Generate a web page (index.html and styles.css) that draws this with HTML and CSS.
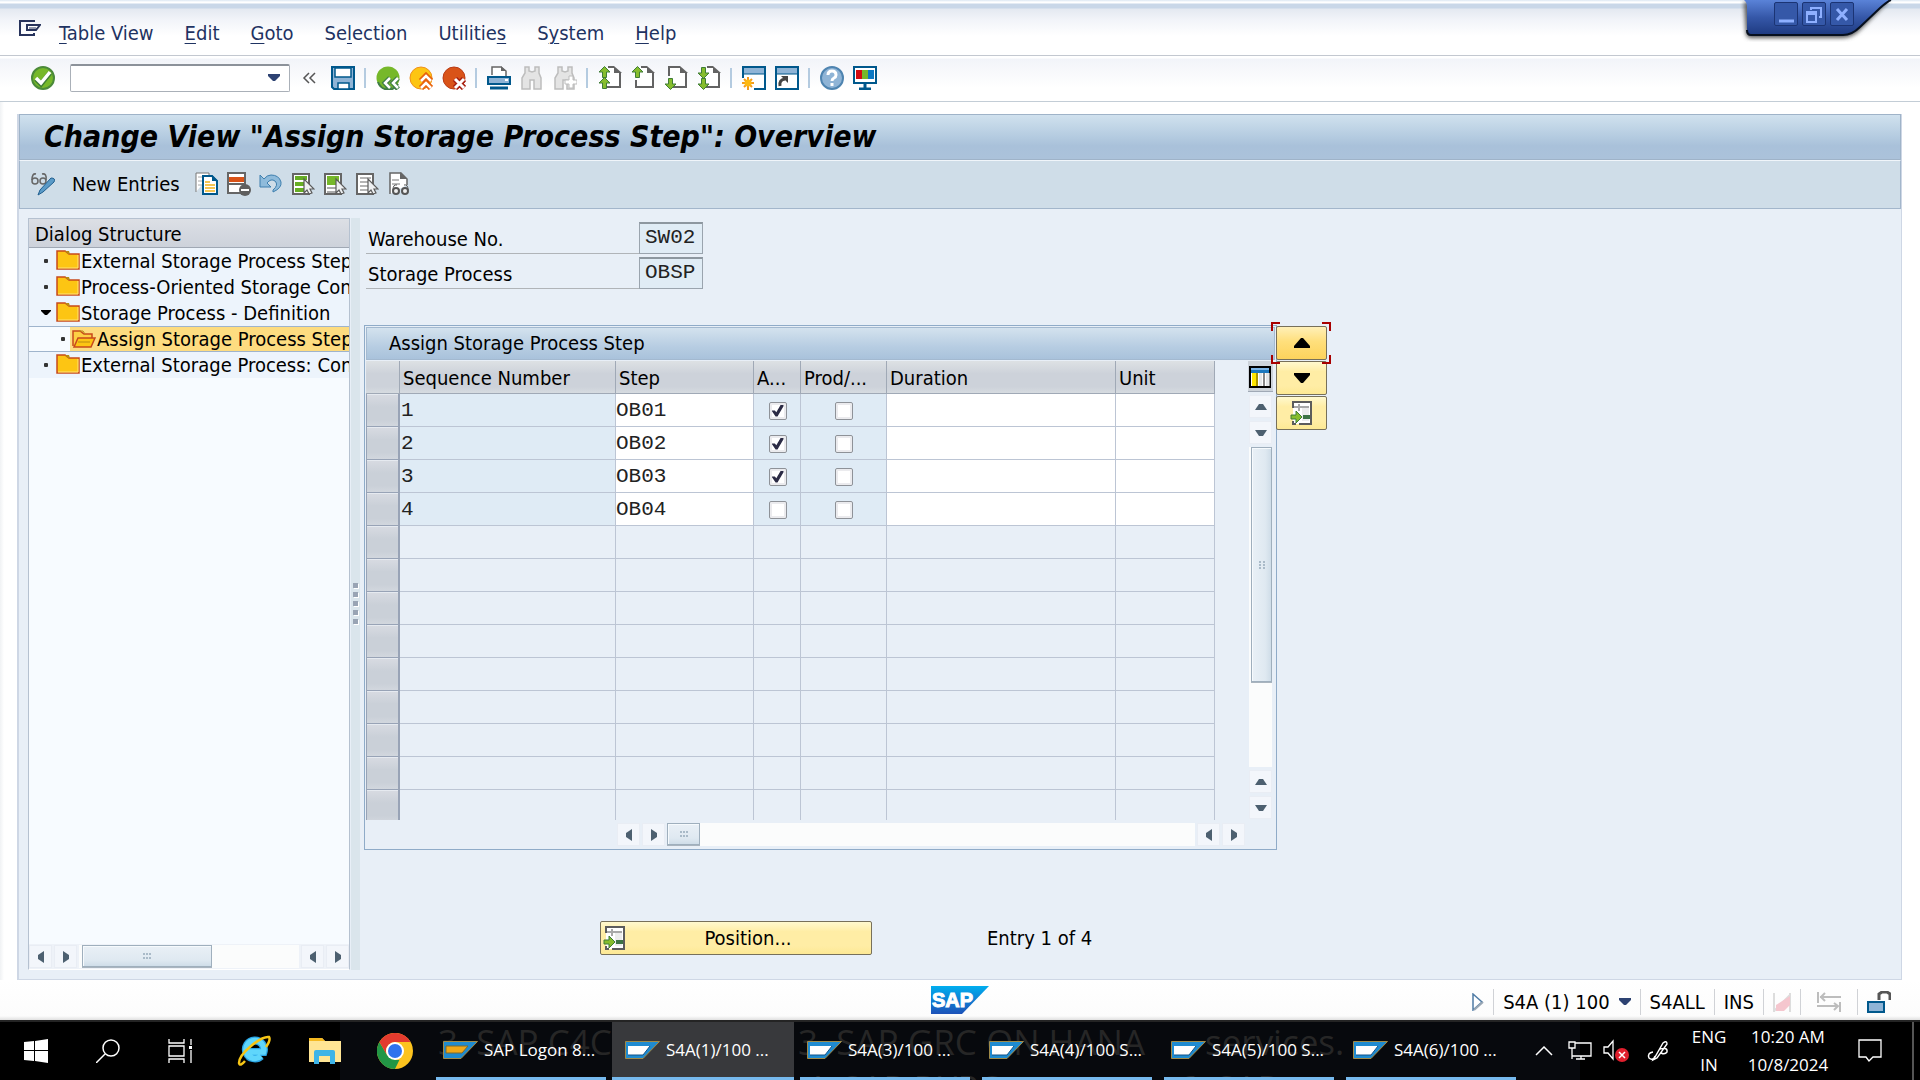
FILE: index.html
```html
<!DOCTYPE html>
<html lang="en">
<head>
<meta charset="utf-8">
<title>Change View "Assign Storage Process Step": Overview</title>
<link rel="stylesheet" href="styles.css">
</head>
<body>
<svg class="sprite" aria-hidden="true">
  <symbol id="up" viewBox="0 0 12 8"><path d="M0 7h12L8 1H4z" fill="#4d6070"/></symbol>
  <symbol id="down" viewBox="0 0 12 8"><path d="M0 1h12L8 7H4z" fill="#4d6070"/></symbol>
  <symbol id="left" viewBox="0 0 8 12"><path d="M7 0v12L1 8V4z" fill="#4d6070"/></symbol>
  <symbol id="right" viewBox="0 0 8 12"><path d="M1 0v12l6-4V4z" fill="#4d6070"/></symbol>
  <symbol id="gripx" viewBox="0 0 10 8"><path d="M1 1h2v2H1zM4 1h2v2H4zM7 1h2v2H7zM1 5h2v2H1zM4 5h2v2H4zM7 5h2v2H7z" fill="#a9bac8"/></symbol>
  <symbol id="gripy" viewBox="0 0 8 10"><path d="M1 1h2v2H1zM5 1h2v2H5zM1 4h2v2H1zM5 4h2v2H5zM1 7h2v2H1zM5 7h2v2H5z" fill="#a9bac8"/></symbol>
  <symbol id="folder" viewBox="0 0 24 24"><path d="M1 2h8l4 3h10v15H1z" fill="#fdc513" stroke="#c8491b" stroke-width="1.5"/><path d="M9 2h4l1 3h-2z" fill="#b98b12"/><path d="M2 19h20V6" fill="none" stroke="#ffe27a"/></symbol>
  <symbol id="folder-open" viewBox="0 0 24 24"><path d="M1 19V4h7l4 3h8v4" fill="#fdd044" stroke="#c8491b" stroke-width="1.5"/><path d="M2 20l4-9h17l-4 9z" fill="#fdc513" stroke="#c8491b" stroke-width="1.5"/><path d="M7 4h4l2 3M6 15h12" fill="none" stroke="#b98b12"/></symbol>
  <symbol id="sapwin" viewBox="0 0 35 18"><path d="M.5.5h34L18 17.500H.5z" fill="#1f8bd0" stroke="#a08a48"/><path d="M3 5h22l-7 9H3z" fill="#fff"/><path d="M3 14h15l7-9" fill="none" stroke="#11558a"/></symbol>
  <symbol id="sapwin-gold" viewBox="0 0 35 18"><path d="M.5.5h34L18 17.500H.5z" fill="#1f8bd0" stroke="#a08a48"/><path d="M3 5h22l-6 7H3z" fill="#f0a818" stroke="#7a6a30"/></symbol>
  <symbol id="page" viewBox="0 0 24 24"><path d="M5 1h11l7 6v15H5" fill="#fff"/><path d="M10 1h6M22 7v14H7" fill="none" stroke="#636363" stroke-width="2"/><path d="M16 0l8 7h-8z" fill="#636363"/></symbol>
  <symbol id="arr-up" viewBox="0 0 12 12"><path d="M6 .5L11.500 6H8v5.500H4V6H.5z" fill="#86bd2d" stroke="#3f7d36"/></symbol>
  <symbol id="arr-down" viewBox="0 0 12 12"><path d="M6 11.500L11.500 6H8V.5H4V6H.5z" fill="#86bd2d" stroke="#3f7d36"/></symbol>
  <symbol id="goto" viewBox="0 0 24 24"><path d="M3 1h18v22H3z" fill="#fff"/><path d="M3 7V1h18v22H9M3 20v3h3" fill="none" stroke="#5c5c5c" stroke-width="2"/><path d="M12 6h7v14h-7z" fill="#ececec"/><path d="M4 6h15M9 3v7" stroke="#a8a8a8" stroke-width="2"/><path d="M13 16h7" stroke="#3d7345" stroke-width="4"/><path d="M1 14h5v-4l6 6-6 6v-4H1z" fill="#86bd2d" stroke="#3f7d36"/></symbol>
  <symbol id="sheet-cursor" viewBox="0 0 24 24"><path d="M2 2h16v20H2z" fill="#fff" stroke="#666" stroke-width="2"/></symbol>
  <symbol id="cursor" viewBox="0 0 24 24"><path d="M13 7v14l3-3 2 4 3-1-2-4h4z" fill="#eef0f2" stroke="#5b5b5b" stroke-width="1.200"/></symbol>
</svg>

<header class="menubar">
  <button class="icon-btn menu-icon" aria-label="System menu"><svg width="22" height="16" viewBox="0 0 22 16"><path d="M15 2V1H1v14h14v-2" fill="none" stroke="#27335c" stroke-width="2"/><path d="M8 5h13l-4 5H8z" fill="#fff" stroke="#27335c" stroke-width="2"/><path d="M10 8h7" stroke="#27335c"/></svg></button>
  <nav class="menus">
    <a href="#"><u>T</u>able View</a><a href="#"><u>E</u>dit</a><a href="#"><u>G</u>oto</a><a href="#">Se<u>l</u>ection</a><a href="#">Utilitie<u>s</u></a><a href="#">S<u>y</u>stem</a><a href="#"><u>H</u>elp</a>
  </nav>
</header>

<div class="window-controls">
  <svg class="window-shape" width="160" height="44" viewBox="0 0 160 44"><defs><linearGradient id="wc" x2="0" y2="1"><stop offset="0" stop-color="#5a83d8"/><stop offset=".5" stop-color="#3557a8"/><stop offset="1" stop-color="#1e3a80"/></linearGradient><filter id="sh"><feGaussianBlur stdDeviation="2"/></filter></defs><path d="M4 2l2 32q1 4 5 4h90q12 0 20-9l28-28z" fill="#555" filter="url(#sh)"/><path d="M4 0q3 2 3 7v24q0 4 4 4h92q9 0 17-8l20-19q8-7 11-8z" fill="url(#wc)"/><path d="M7 30q0 5 4 5h92q9 0 17-8l20-19q8-7 11-8" fill="none" stroke="#07101f" stroke-width="2"/></svg>
  <div class="window-buttons">
    <button aria-label="Minimize"><svg width="22" height="22"><path d="M4 18h15" stroke="#8fb0ff" stroke-width="3"/></svg></button>
    <button aria-label="Restore"><svg width="22" height="22"><path d="M8 7V5h10v9h-2" fill="none" stroke="#8fb0ff" stroke-width="2"/><path d="M4 9h9v10H4zM4 11h9" fill="none" stroke="#8fb0ff" stroke-width="2"/></svg></button>
    <button aria-label="Close"><svg width="22" height="22"><path d="M6 6l10 11M16 6L6 17" stroke="#8fb0ff" stroke-width="3"/></svg></button>
  </div>
</div>

<div class="toolbar" role="toolbar" aria-label="Standard">
  <button class="icon-btn ok" aria-label="Enter"><svg width="24" height="24" viewBox="0 0 24 24"><circle cx="12" cy="12" r="11" fill="#76b82a" stroke="#4b8a3a" stroke-width="2"/><path d="M5 13l5 5 9-11" fill="none" stroke="#3f7d36" stroke-width="5"/><path d="M5 12l5 5 9-11" fill="none" stroke="#fff" stroke-width="3.500"/></svg></button>
  <label class="command"><input type="text" aria-label="Command"><svg width="14" height="8"><path d="M1 0h12v2L8 7H6L1 2z" fill="#2d4272"/></svg></label>
  <button class="icon-btn collapse" aria-label="Hide command field"><svg width="14" height="14" viewBox="0 0 14 14"><path d="M7 2L2 7l5 5M13 2L8 7l5 5" fill="none" stroke="#555" stroke-width="1.500"/></svg></button>
  <button class="icon-btn save" aria-label="Save"><svg width="24" height="24"><path d="M1 1h22v22H3l-2-2z" fill="#8fb4d6" stroke="#00588c" stroke-width="2"/><path d="M4 2h16v9H4zM7 17h11v6H7z" fill="#fff" stroke="#00588c" stroke-width="1.500"/></svg></button>
  <span class="sep"></span>
  <button class="icon-btn" aria-label="Back"><svg width="24" height="24"><circle cx="12" cy="12" r="11.500" fill="#76b82a"/><path d="M2 16a11 11 0 0 0 20 2" fill="none" stroke="#3f7d46" stroke-width="2"/><path d="M14 12l-5 5 5 6M22 12l-5 5 5 6" fill="none" stroke="#3f7d46" stroke-width="5"/><path d="M14 12l-5 5 5 5M22 12l-5 5 5 5" fill="none" stroke="#fff" stroke-width="2.500"/></svg></button>
  <button class="icon-btn" aria-label="Exit"><svg width="24" height="24"><circle cx="12" cy="12" r="11" fill="#fdc513" stroke="#f0901c"/><path d="M12 15l5-5 5 5M12 22l5-5 5 5" fill="none" stroke="#e8620c" stroke-width="6"/><path d="M12 15l5-5 5 5M12 22l5-5 5 5" fill="none" stroke="#fff" stroke-width="2.500"/></svg></button>
  <button class="icon-btn" aria-label="Cancel"><svg width="24" height="24"><circle cx="12" cy="12" r="11" fill="#d95318" stroke="#b93a14"/><path d="M13 13l9 9M22 13l-9 9" stroke="#a81f10" stroke-width="6"/><path d="M13 13l9 9M22 13l-9 9" stroke="#fff" stroke-width="3"/></svg></button>
  <span class="sep"></span>
  <button class="icon-btn" aria-label="Print"><svg width="24" height="24"><path d="M5 9V1h9l5 4v5" fill="#fff" stroke="#666" stroke-width="1.500"/><path d="M14 0l5 5h-5z" fill="#666"/><rect x="1" y="11" width="22" height="7" fill="#8fb4d6" stroke="#00588c" stroke-width="2"/><path d="M18 14h3" stroke="#fff" stroke-width="2"/><path d="M3 22h18" stroke="#00588c" stroke-width="3"/></svg></button>
  <button class="icon-btn" aria-label="Find" disabled><svg width="24" height="24"><path d="M5 1h4v4l3 1 3-1V1h4v6l2 5v11h-7v-9h-4v9H2V12l3-5z" fill="#e4e4e4" stroke="#bdbdbd" stroke-width="1.500"/></svg></button>
  <button class="icon-btn" aria-label="Find next" disabled><svg width="24" height="24"><path d="M5 1h4v4l3 1 3-1V1h4v6l2 5v11h-7v-9h-4v9H2V12l3-5z" fill="#e4e4e4" stroke="#bdbdbd" stroke-width="1.500"/><path d="M16 10h4v4h4v4h-4v4h-4v-4h-4v-4h4z" fill="#fff" stroke="#bdbdbd"/></svg></button>
  <span class="sep"></span>
  <button class="icon-btn" aria-label="First page"><svg width="24" height="24"><use href="#page"/><use href="#arr-up" width="13" height="12"/><use href="#arr-up" y="11" width="13" height="12"/></svg></button>
  <button class="icon-btn" aria-label="Previous page"><svg width="24" height="24"><use href="#page"/><path d="M5 14v7h3" fill="none" stroke="#636363" stroke-width="2"/><use href="#arr-up" width="13" height="12"/></svg></button>
  <button class="icon-btn" aria-label="Next page"><svg width="24" height="24"><use href="#page"/><path d="M5 10V1h6" fill="none" stroke="#636363" stroke-width="2"/><use href="#arr-down" y="12" width="13" height="12"/></svg></button>
  <button class="icon-btn" aria-label="Last page"><svg width="24" height="24"><use href="#page"/><use href="#arr-down" y="1" width="13" height="12"/><use href="#arr-down" y="12" width="13" height="12"/></svg></button>
  <span class="sep"></span>
  <button class="icon-btn" aria-label="Create session"><svg width="24" height="24"><path d="M1 12V1h22v22H12" fill="#fff" stroke="#00588c" stroke-width="2"/><path d="M2 2h20v6H2z" fill="#8fb4d6"/><path d="M1 8h22" stroke="#00588c"/><path d="M6 11v13M0 17h12M2 13l8 8M10 13l-8 8" stroke="#f59b1a" stroke-width="2"/><circle cx="6" cy="17" r="3.500" fill="#fdb913"/></svg></button>
  <button class="icon-btn" aria-label="Create shortcut"><svg width="24" height="24"><path d="M1 1h22v22H1z" fill="#fff" stroke="#00588c" stroke-width="2"/><path d="M2 2h20v6H2z" fill="#8fb4d6"/><path d="M1 8h22" stroke="#00588c"/><path d="M5 20q-1-6 5-7" fill="none" stroke="#444" stroke-width="3"/><path d="M6 10h7v7z" fill="#444"/></svg></button>
  <span class="sep"></span>
  <button class="icon-btn" aria-label="Help"><svg width="24" height="24"><circle cx="12" cy="12" r="11" fill="#8fb4d6" stroke="#4e84b0" stroke-width="2"/><path d="M8 9q0-4 4-4t4 4q0 2-2 3t-2 3M12 17v3" fill="none" stroke="#fff" stroke-width="3"/></svg></button>
  <button class="icon-btn" aria-label="Customize local layout"><svg width="24" height="24"><rect x="1" y="1" width="22" height="16" fill="#fff" stroke="#00588c" stroke-width="2"/><path d="M3 4h6v9H3z" fill="#d20a11"/><path d="M9 4h6v9H9z" fill="#76b82a"/><path d="M15 4h6v9h-6z" fill="#0a78c4"/><path d="M12 17v6M6 23h12" stroke="#00588c" stroke-width="3"/></svg></button>
</div>

<main class="work">
  <h1 class="title">Change View "Assign Storage Process Step": Overview</h1>
  <div class="app-toolbar" role="toolbar" aria-label="Application">
    <button class="icon-btn" aria-label="Display/Change"><svg width="24" height="24"><g fill="none" stroke="#666" stroke-width="1.500"><circle cx="4" cy="9" r="3"/><circle cx="12" cy="9" r="3"/><path d="M1 8q0-7 4-6M15 8q1-7-4-6"/></g><path d="M7 23l2-5L20 6q5 0 3 4L12 20z" fill="#5b9bc8" stroke="#215f8f"/></svg></button>
    <button class="text-btn">New Entries</button>
    <button class="icon-btn" aria-label="Copy as"><svg width="24" height="24"><path d="M1 20V1h13v3" fill="#fff" stroke="#777"/><path d="M3 5h4M3 9h4M3 13h4" stroke="#aaa"/><path d="M8 4h9l5 5v13H8z" fill="#fff" stroke="#00588c" stroke-width="2"/><path d="M17 3l6 6h-6z" fill="#00588c"/><path d="M10 10h5M10 13h10M10 16h10M10 19h10" stroke="#f2b21b" stroke-width="1.500"/></svg></button>
    <button class="icon-btn" aria-label="Delete"><svg width="24" height="24"><path d="M1 1h17v20H1z" fill="#fff" stroke="#666" stroke-width="2"/><path d="M2 5h15v5H2z" fill="#d95318"/><path d="M1 12h17" stroke="#666" stroke-width="2"/><circle cx="18" cy="18" r="6" fill="#5f5f5f"/><path d="M14 18h8" stroke="#fff" stroke-width="2"/></svg></button>
    <button class="icon-btn" aria-label="Undo change"><svg width="24" height="24"><path d="M1 3v12h11l-4-4q4-5 8-2 4 4-2 9v2q9-4 8-10-2-7-10-7-4 0-7 4z" fill="#8fbbdb" stroke="#3e7fae"/></svg></button>
    <button class="icon-btn" aria-label="Select all"><svg width="24" height="24"><use href="#sheet-cursor"/><path d="M4 6h12M4 12h9M4 18h9" stroke="#66ad24" stroke-width="4"/><use href="#cursor"/></svg></button>
    <button class="icon-btn" aria-label="Select block"><svg width="24" height="24"><use href="#sheet-cursor"/><path d="M4 4h12v9H4z" fill="#76b82a"/><path d="M4 16h9M4 20h9" stroke="#aaa" stroke-width="2"/><use href="#cursor"/></svg></button>
    <button class="icon-btn" aria-label="Deselect all"><svg width="24" height="24"><use href="#sheet-cursor"/><path d="M5 6h11M5 10h9M5 14h8M5 18h8" stroke="#b5b5b5" stroke-width="2"/><use href="#cursor"/></svg></button>
    <button class="icon-btn" aria-label="Configuration help"><svg width="24" height="24"><path d="M3 22V1h11l6 6v6" fill="#fff" stroke="#666" stroke-width="1.500"/><path d="M13 0l7 7h-7z" fill="#666"/><path d="M5 8h7M5 12h8" stroke="#bbb" stroke-width="2"/><g fill="#eee" stroke="#555" stroke-width="2"><circle cx="9" cy="19" r="3"/><circle cx="18" cy="19" r="3"/></g><path d="M6 18q0-6 4-5M21 18q0-6-4-5" fill="none" stroke="#555"/></svg></button>
  </div>

  <div class="workspace">
    <aside class="tree">
      <h2 class="tree-head">Dialog Structure</h2>
      <ul class="tree-list">
        <li><i class="dot"></i><svg class="folder"><use href="#folder"/></svg><a href="#">External Storage Process Step</a></li>
        <li><i class="dot"></i><svg class="folder"><use href="#folder"/></svg><a href="#">Process-Oriented Storage Con</a></li>
        <li><svg class="caret" viewBox="0 0 10 6"><path d="M0 0h10v1L6 5H4L0 1z"/></svg><svg class="folder"><use href="#folder"/></svg><a href="#">Storage Process - Definition</a></li>
        <li class="child"><i class="dot"></i><span class="picked"><svg class="folder"><use href="#folder-open"/></svg><a href="#" aria-current="true">Assign Storage Process Step</a></span></li>
        <li><i class="dot"></i><svg class="folder"><use href="#folder"/></svg><a href="#">External Storage Process: Con</a></li>
      </ul>
      <div class="tree-scroll">
        <button class="sb" aria-label="Scroll left"><svg><use href="#left"/></svg></button><button class="sb" aria-label="Scroll right"><svg><use href="#right"/></svg></button>
        <div class="track"><div class="thumb tree-thumb"><svg width="10" height="8"><use href="#gripx"/></svg></div></div>
        <button class="sb" aria-label="Scroll left"><svg><use href="#left"/></svg></button><button class="sb" aria-label="Scroll right"><svg><use href="#right"/></svg></button>
      </div>
    </aside>
    <div class="splitter"><i></i><i></i><i></i><i></i><i></i></div>

    <section class="detail">
      <div class="field"><label for="wh">Warehouse No.</label><input id="wh" value="SW02" readonly></div>
      <div class="field"><label for="sp">Storage Process</label><input id="sp" value="OBSP" readonly></div>

      <div class="control">
        <div class="panel">
          <h2 class="panel-title">Assign Storage Process Step</h2>
          <div class="panel-body">
            <div class="table-clip">
            <table>
              <colgroup><col class="c-sel"><col class="c-seq"><col class="c-step"><col class="c-auto"><col class="c-prod"><col class="c-dur"><col class="c-unit"></colgroup>
              <thead><tr><th></th><th>Sequence Number</th><th>Step</th><th>A...</th><th>Prod/...</th><th>Duration</th><th>Unit</th></tr></thead>
              <tbody>
                <tr class="data"><td></td><td>1</td><td><input class="cell" aria-label="Step 1" value="OB01"></td><td><input type="checkbox" aria-label="Automatic 1" checked></td><td><input type="checkbox" aria-label="Product 1"></td><td></td><td></td></tr>
                <tr class="data"><td></td><td>2</td><td><input class="cell" aria-label="Step 2" value="OB02"></td><td><input type="checkbox" aria-label="Automatic 2" checked></td><td><input type="checkbox" aria-label="Product 2"></td><td></td><td></td></tr>
                <tr class="data"><td></td><td>3</td><td><input class="cell" aria-label="Step 3" value="OB03"></td><td><input type="checkbox" aria-label="Automatic 3" checked></td><td><input type="checkbox" aria-label="Product 3"></td><td></td><td></td></tr>
                <tr class="data"><td></td><td>4</td><td><input class="cell" aria-label="Step 4" value="OB04"></td><td><input type="checkbox" aria-label="Automatic 4"></td><td><input type="checkbox" aria-label="Product 4"></td><td></td><td></td></tr>
                <tr><td></td><td></td><td></td><td></td><td></td><td></td><td></td></tr>
                <tr><td></td><td></td><td></td><td></td><td></td><td></td><td></td></tr>
                <tr><td></td><td></td><td></td><td></td><td></td><td></td><td></td></tr>
                <tr><td></td><td></td><td></td><td></td><td></td><td></td><td></td></tr>
                <tr><td></td><td></td><td></td><td></td><td></td><td></td><td></td></tr>
                <tr><td></td><td></td><td></td><td></td><td></td><td></td><td></td></tr>
                <tr><td></td><td></td><td></td><td></td><td></td><td></td><td></td></tr>
                <tr><td></td><td></td><td></td><td></td><td></td><td></td><td></td></tr>
                <tr class="last"><td></td><td></td><td></td><td></td><td></td><td></td><td></td></tr>
              </tbody>
            </table>
            </div>
            <div class="vscroll">
              <button class="config" aria-label="Table settings"><svg width="22" height="22"><rect x="1" y="1" width="20" height="20" fill="#fff" stroke="#000" stroke-width="2"/><path d="M2 2h18v5H2z" fill="#1c78bf"/><path d="M2 2h18v2H2z" fill="#7db5e6"/><path d="M3 7h5v13H3z" fill="#ffe600"/><path d="M7 7h2v13H7z" fill="#a89400"/><path d="M14 7h2v13h-2zM20 7h1v13h-1z" fill="#888"/><path d="M10 7h3v13h-3zM17 7h3v13h-3z" fill="#e4e6e8"/></svg></button>
              <button class="sb" aria-label="Scroll up"><svg><use href="#up"/></svg></button><button class="sb" aria-label="Scroll down"><svg><use href="#down"/></svg></button>
              <div class="track"><div class="thumb"><svg width="8" height="10"><use href="#gripy"/></svg></div></div>
              <button class="sb" aria-label="Scroll up"><svg><use href="#up"/></svg></button><button class="sb" aria-label="Scroll down"><svg><use href="#down"/></svg></button>
            </div>
          </div>
          <div class="hscroll">
            <button class="sb" aria-label="Scroll left"><svg><use href="#left"/></svg></button><button class="sb" aria-label="Scroll right"><svg><use href="#right"/></svg></button>
            <div class="track"><div class="thumb"><svg width="10" height="8"><use href="#gripx"/></svg></div></div>
            <button class="sb" aria-label="Scroll left"><svg><use href="#left"/></svg></button><button class="sb" aria-label="Scroll right"><svg><use href="#right"/></svg></button>
          </div>
        </div>
        <div class="side">
          <button class="yellow focused" aria-label="Previous entry"><svg width="16" height="10"><path d="M7 0h2l7 8v2H0V8z"/></svg><svg class="focus-frame" width="60" height="42" viewBox="0 0 60 42"><path d="M1 9V1h8M51 1h8v8M59 33v8h-8M9 41H1v-8" fill="none" stroke="#a80000" stroke-width="2"/></svg></button>
          <button class="yellow" aria-label="Next entry"><svg width="16" height="10"><path d="M7 10h2l7-8V0H0v2z"/></svg></button>
          <button class="yellow" aria-label="Details"><svg width="24" height="24"><use href="#goto"/></svg></button>
        </div>
      </div>

      <div class="footer-row">
        <button class="yellow position"><svg width="24" height="24"><use href="#goto"/></svg><span>Position...</span></button>
        <span>Entry 1 of 4</span>
      </div>
    </section>
  </div>
</main>

<footer class="status">
  <span></span>
  <svg width="58" height="28" viewBox="0 0 58 28"><defs><linearGradient id="sg" x2="0" y2="1"><stop offset="0" stop-color="#00aeef"/><stop offset="1" stop-color="#1d51b8"/></linearGradient></defs><path d="M0 0h58L31 28H0z" fill="url(#sg)"/><text x="1" y="21" font-family="Liberation Sans, sans-serif" font-weight="bold" font-size="20" fill="#fff" stroke="#fff" stroke-width="1">SAP</text></svg>
  <div class="status-info">
    <button class="icon-btn" aria-label="Expand status"><svg width="12" height="18"><path d="M1 1l9 8-9 8z" fill="#fff" stroke="#4f7ba5" stroke-width="1.500"/><path d="M2 17l9-8" stroke="#9aa7b4" stroke-width="2"/></svg></button>
    <span class="bar"></span>
    <button class="text-btn system">S4A (1) 100<svg width="12" height="8"><path d="M0 0h12v2L7 7H5L0 2z" fill="#2d4272"/></svg></button>
    <span class="bar"></span><span>S4ALL</span><span class="bar"></span><span>INS</span><span class="bar"></span>
    <svg width="18" height="20"><path d="M1 1v19M17 1v19M1 19L17 3" stroke="#ddd" stroke-width="2"/><path d="M3 19V13L17 4v9l-6 6z" fill="#f5c6ce"/></svg>
    <span class="bar"></span>
    <svg class="transfer" width="24" height="20"><path d="M1 0v11M3 5h21M8 1L4 5l4 4M23 10v10M0 14h21M17 11l4 3-4 4" fill="none" stroke="#bdbdbd" stroke-width="2"/></svg>
    <span class="bar"></span>
    <svg width="24" height="22"><path d="M12 9V3l3-2h5l3 2v6" fill="none" stroke="#555" stroke-width="3"/><rect x="1" y="11" width="16" height="10" fill="#8fb4d6" stroke="#00588c" stroke-width="2"/></svg>
  </div>
</footer>

<div class="taskbar">
  <div class="ghost" aria-hidden="true"><span class="g1">3. SAP C4C</span><span class="g2">3. SAP GRC ON HANA</span><span class="g3">services.</span><span class="g4">4. SAP PI/PO</span><span class="g5">6. SAP</span></div>
  <div class="pinned">
    <button aria-label="Start"><svg width="24" height="24"><path d="M0 3l10-1v9H0zM11 2l13-2v11H11zM0 12h10v10L0 21zM11 12h13v12l-13-2z" fill="#fff"/></svg></button>
    <button aria-label="Search"><svg width="24" height="24"><circle cx="15" cy="9" r="8" fill="none" stroke="#fff" stroke-width="1.500"/><path d="M9 15l-9 9" stroke="#fff" stroke-width="1.500"/></svg></button>
    <button aria-label="Task view"><svg width="24" height="24"><path d="M1 0v4h15V0M1 7h15v10H1zM1 24v-4h15v4M23 0v6M23 11v13" fill="none" stroke="#fff" stroke-width="1.300"/><path d="M21 7h4v3h-4z" fill="#fff"/></svg></button>
    <button class="browser" aria-label="Internet Explorer"><svg width="36" height="36" viewBox="0 0 36 36"><path d="M25 23a9 9 0 1 1 2.500-4H11" fill="none" stroke="#2aa4e4" stroke-width="8"/><path d="M25 23a9 9 0 1 1 2.500-4H11" fill="none" stroke="#5fd6fb" stroke-width="5.500"/><path d="M9 28q-5 6-6 2 0-7 12-17T33 4q2 3-3 10" fill="none" stroke="#f6c515" stroke-width="2.500"/></svg></button>
    <button aria-label="File Explorer"><svg width="32" height="28"><path d="M0 1h13l3 3h16v21H0z" fill="#ffe594"/><path d="M0 1h13l3 3H0z" fill="#f5b921"/><path d="M5 27V15q0-2 2-2h17q2 0 2 2v12h-5v-8H10v8z" fill="#3eb4e7"/></svg></button>
    <button class="browser" aria-label="Chrome"><svg width="36" height="36" viewBox="0 0 36 36"><circle cx="18" cy="18" r="18" fill="#fcc31e"/><path d="M2.400 9l8 13.500 8 4.500h4L18 36A18 18 0 0 1 2.400 9z" fill="#229645"/><path d="M2.400 9A18 18 0 0 1 33.600 9H18a9 9 0 0 0-8 13z" fill="#e33b2e"/><circle cx="18" cy="18" r="9" fill="#fff"/><circle cx="18" cy="18" r="7" fill="#2f73ee"/></svg></button>
  </div>
  <div class="tasks">
    <button><svg><use href="#sapwin-gold"/></svg>SAP Logon 8...</button>
    <button class="active"><svg><use href="#sapwin"/></svg>S4A(1)/100 ...</button>
    <button><svg><use href="#sapwin"/></svg>S4A(3)/100 ...</button>
    <button><svg><use href="#sapwin"/></svg>S4A(4)/100 S...</button>
    <button><svg><use href="#sapwin"/></svg>S4A(5)/100 S...</button>
    <button><svg><use href="#sapwin"/></svg>S4A(6)/100 ...</button>
  </div>
  <div class="tray">
    <button class="t-icon" aria-label="Show hidden icons"><svg width="18" height="10"><path d="M1 9l8-8 8 8" fill="none" stroke="#fff" stroke-width="1.500"/></svg></button>
    <button class="t-icon" aria-label="Network"><svg width="24" height="20"><path d="M7 2h16v13H4V8M13 15v3M8 18h9M1 1h6v6H1zM4 7v11" fill="none" stroke="#fff" stroke-width="1.300"/></svg></button>
    <button class="t-icon" aria-label="Volume muted"><svg width="26" height="24"><path d="M1 8h4l5-6v18l-5-6H1z" fill="none" stroke="#fff" stroke-width="1.300"/><circle cx="19" cy="16" r="7" fill="#e01f2d"/><path d="M16 13l6 6M22 13l-6 6" stroke="#fff" stroke-width="1.500"/></svg></button>
    <button class="t-pen" aria-label="Ink workspace"><svg width="22" height="22"><path d="M6 12q-6 1-4 6 3 3 6-1L16 3q4-3 4 1L10 18l-4 2 2-4M13 9q8-2 7 3-2 3-6 1" fill="none" stroke="#fff" stroke-width="1.400"/></svg></button>
    <button class="t-lang">ENG<br>IN</button>
    <button class="t-clock">10:20 AM<br>10/8/2024</button>
    <button class="t-note" aria-label="Notifications"><svg width="24" height="24"><path d="M1 1h22v17h-8l-4 4-3-4H1z" fill="none" stroke="#fff" stroke-width="1.300"/></svg></button>
    <span class="peek"></span>
  </div>
</div>
</body>
</html>
```
FILE: styles.css
```css
* { box-sizing: border-box; }
body {
  margin: 0;
  min-height: 100vh;
  display: flex;
  flex-direction: column;
  background: linear-gradient(90deg, #f0f2f4, #fff 4px);
  color: #000;
  font: 20px/24px "DejaVu Sans Condensed", "DejaVu Sans", sans-serif;
}
h1, h2, ul { margin: 0; padding: 0; font-weight: normal; }
button {
  margin: 0;
  padding: 0;
  border: 0;
  background: none;
  color: inherit;
  font: inherit;
}
a { color: inherit; text-decoration: none; }
svg { display: block; flex: none; }
.sprite { position: absolute; width: 0; height: 0; }
.icon-btn { flex: none; display: block; }

/* Menu bar */
.menubar {
  display: flex;
  align-items: center;
  height: 56px;
  padding: 11px 19px 0;
  border-bottom: 1px solid #c3c8d0;
  background: linear-gradient(#dce7f2 0, #fff 2px, #fff 3px, #c9d7e8 4px, #c9d7e8 8px, #e4e9f1 9px, #f2f4f9 20px, #fff 36px);
}
.menu-icon { margin-bottom: 10px; }
.menus { display: flex; gap: 31px; margin-left: 18px; color: #1f3362; }
.menus u { text-underline-offset: 3px; text-decoration-thickness: 1px; }

.window-controls { position: absolute; top: 0; right: 20px; width: 160px; height: 44px; }
.window-buttons { position: absolute; top: 2px; left: 34px; display: flex; gap: 4px; }
.window-buttons button {
  width: 24px;
  height: 24px;
  border: 1px solid #1b3474;
  border-radius: 2px;
  background: #3558a8;
}

/* Standard toolbar */
.toolbar {
  display: flex;
  align-items: center;
  gap: 9px;
  height: 46px;
  padding: 0 31px 2px;
  border-bottom: 1px solid #c3cdd6;
  background: linear-gradient(#fff 0, #fff 2px, #f2f4f9 3px, #fff 32px);
}
.command { position: relative; width: 220px; height: 28px; margin-left: 6px; }
.command input {
  width: 100%;
  height: 100%;
  border: 1px solid #aab0b8;
  border-top: 2px solid #8c929a;
  border-radius: 2px;
  background: #fff;
  font: inherit;
}
.command svg { position: absolute; right: 9px; top: 10px; }
.collapse { margin-left: 3px; }
.save { margin-left: 6px; }
.sep { width: 3px; height: 20px; border-left: 2px solid #b4cbe0; }

/* Work area */
.work {
  flex: 1;
  display: flex;
  flex-direction: column;
  margin: 12px 18px 0 17px;
  border-left: 2px solid #ced7e5;
  border-right: 1px solid #ced7e5;
  border-bottom: 1px solid #ced7e5;
  background: #e8eff7;
}
.title {
  height: 46px;
  padding: 0 24px;
  border: 1px solid #9fb3c8;
  background: linear-gradient(#d0e1ee, #b4cbe0 50%, #a9c1da 70%, #abc2da);
  font: italic bold 30px/44px "DejaVu Sans Condensed", "DejaVu Sans", sans-serif;
  white-space: nowrap;
}
.app-toolbar {
  display: flex;
  align-items: center;
  gap: 8px;
  height: 49px;
  padding: 0 11px 2px;
  border: 1px solid #a3b6cb;
  border-top: 1px solid #f0f5fa;
  background: #cfdde8;
}
.text-btn { white-space: nowrap; }
.app-toolbar .text-btn { margin: 0 7px 0 9px; }
.workspace { flex: 1; display: flex; padding: 9px; }

/* Dialog structure */
.tree {
  display: flex;
  flex-direction: column;
  width: 322px;
  margin-right: 1px;
  border: 1px solid #b5c1d0;
  border-bottom-color: #fff;
  background: #f7fbff;
  overflow: hidden;
}
.tree-head {
  height: 29px;
  padding-left: 6px;
  border-bottom: 1px solid #a0a8b4;
  background: linear-gradient(#dcdfe5, #cdd2db);
  font-size: 20px;
  line-height: 30px;
}
.tree-list { flex: 1; list-style: none; }
.tree-list li {
  display: flex;
  align-items: center;
  height: 26px;
  padding-left: 12px;
  background: #edf4fc;
  line-height: 26px;
  white-space: nowrap;
}
.dot { flex: none; width: 4px; height: 4px; margin: 0 8px 0 3px; background: #333; border-radius: 1px; }
.caret { width: 10px; height: 6px; margin-right: 5px; }
.folder { width: 24px; height: 24px; margin-right: 1px; }
.tree-list li.child { padding-left: 29px; background: #f7fbff; border: solid #9fb4cc; border-width: 1px 0; }
.child .dot { margin-right: 5px; }
.picked { flex: 1; display: flex; align-items: center; height: 24px; padding-left: 2px; background: #fddc80; }

/* Scroll bars */
.sb {
  flex: none;
  display: flex;
  align-items: center;
  justify-content: center;
  width: 23px;
  height: 23px;
  background: #f3f6fb;
  border: 1px solid #e9edf4;
}
.sb svg { width: 12px; height: 12px; }
.track { flex: 1; display: flex; background: #fbfcfc; }
.thumb {
  display: flex;
  align-items: center;
  justify-content: center;
  border: 1px solid #9fafbd;
  background: linear-gradient(#e9f0f6, #dfe9f1 70%, #cfdde8);
  box-shadow: inset 1px 1px #f6fafd, 0 1px #a9b4be;
}
.tree-scroll { display: flex; align-items: center; gap: 2px; height: 25px; background: #eef2f8; }
.tree-scroll .track { height: 23px; padding: 0 3px; }
.tree-thumb { width: 130px; height: 22px; }
.splitter {
  display: flex;
  flex-direction: column;
  justify-content: center;
  align-items: center;
  gap: 4px;
  width: 9px;
  padding-top: 18px;
  background: #dae5ec;
}
.splitter i { width: 5px; height: 5px; background: #99a4b4; box-shadow: 1px 1px #fff; }

/* Detail */
.detail { flex: 1; padding: 4px 0 0 4px; }
.field { display: flex; height: 32px; margin: 0 0 3px 2px; }
.field label { width: 273px; padding: 5px 2px 0; border-bottom: 1px solid #b0b4b8; }
.field input, .cell, td {
  font: 21px/24px "Courier New", "Liberation Mono", monospace;
  color: #222;
}
.field input {
  width: 64px;
  padding: 0 0 2px 5px;
  border: 1px solid #9aa4ae;
  border-top: 2px solid #8d979f;
  background: #e0ecf5;
}
.control { display: flex; align-items: flex-start; margin-top: 36px; }
.panel { width: 913px; border: 1px solid #8fabc8; padding: 1px 1px 3px; }
.panel-title {
  height: 33px;
  margin-bottom: 1px;
  padding-left: 22px;
  border: 1px solid #a3b9d0;
  background: linear-gradient(#d3e2ee, #b7cde2 60%, #a9c2db);
  font-size: 20px;
  line-height: 30px;
}
.panel-body { display: flex; justify-content: space-between; height: 459px; padding-right: 2px; }
.table-clip { overflow: hidden; }
table { width: 849px; table-layout: fixed; border-collapse: separate; border-spacing: 0; }
.c-sel { width: 34px; }
.c-seq { width: 216px; }
.c-step { width: 138px; }
.c-auto { width: 47px; }
.c-prod { width: 86px; }
.c-dur { width: 229px; }
.c-unit { width: 99px; }
th {
  height: 33px;
  padding: 2px 0 0 3px;
  border-right: 1px solid #a0a9b6;
  border-bottom: 1px solid #a0a9b6;
  background: linear-gradient(#dde1e4, #cdd2da 40%, #cdd2da 80%, #d6dbe0);
  font: 20px/24px "DejaVu Sans Condensed", "DejaVu Sans", sans-serif;
  text-align: left;
  white-space: nowrap;
}
td { height: 33px; padding: 1px 0 0 1px; border-right: 1px solid #bcc5d4; border-bottom: 1px solid #bcc5d4; }
td:first-child {
  border: solid #98a3b6;
  border-width: 0 2px 1px 1px;
  background: linear-gradient(#d8dbe2, #cad0d8 40%, #cad0d8 80%, #d2d7de);
  box-shadow: inset 0 1px #e6eaf0;
}
.data td { background: #dfebf5; }
.data td:first-child { background: linear-gradient(#d8dbe2, #cad0d8 40%, #cad0d8 80%, #d2d7de); }
.data td:nth-child(3), .data td:nth-child(6), .data td:nth-child(7) { background: #fff; }
.data td:nth-child(3) { padding-left: 0; }
.cell { display: block; width: 100%; height: 28px; padding: 0; border: 0; background: none; }
input[type="checkbox"] {
  appearance: none;
  display: block;
  width: 18px;
  height: 18px;
  margin: 0 auto;
  border: 1px solid #8e9298;
  border-radius: 2px;
  background: #fff;
  box-shadow: inset 0 0 0 2px #ebebee;
}
input[type="checkbox"]:checked::before {
  content: "";
  display: block;
  width: 12px;
  height: 12px;
  margin: 2px;
  background: #2b2b45;
  clip-path: polygon(0 50%, 28% 50%, 40% 65%, 78% 0, 100% 0, 100% 15%, 50% 100%, 34% 100%);
}
.vscroll { display: flex; flex-direction: column; align-items: center; gap: 3px; width: 25px; padding-bottom: 1px; }
.config { width: 25px; height: 31px; padding: 2px 1px 0; background: #cdd3da; border-bottom: 1px solid #a0a9b6; }
.vscroll .track { width: 23px; padding-left: 2px; }
.vscroll .thumb { width: 21px; height: 235px; background: linear-gradient(90deg, #e9f0f6, #dfe9f1 70%, #cfdde8); }
.hscroll { display: flex; gap: 2px; height: 23px; margin: 3px 30px 0 251px; }
.hscroll .thumb { width: 33px; height: 22px; }
.side { display: flex; flex-direction: column; gap: 1px; padding-top: 1px; margin-left: -1px; }
.yellow {
  display: flex;
  align-items: center;
  justify-content: center;
  width: 51px;
  height: 34px;
  border: 1px solid #77705a;
  border-radius: 2px;
  background: linear-gradient(#fff9cf, #ffeda5 30%, #ffeda5 75%, #fde994);
}
.focused { position: relative; background: linear-gradient(#fff0b8, #ffdf7c 45%, #fdd35c); }
.focus-frame { position: absolute; top: -5px; left: -6px; }
.footer-row { display: flex; align-items: center; gap: 115px; margin: 71px 0 0 236px; }
.position { width: 272px; padding: 0 2px; }
.position span { flex: 1; }

/* Status bar */
.status {
  display: grid;
  grid-template-columns: 1fr auto 1fr;
  align-items: center;
  height: 40px;
  padding: 0 29px;
  background: linear-gradient(#fff, #fcfcfc 90%, #e0e0e0);
}
.status-info { display: flex; align-items: center; justify-content: flex-end; gap: 9px; padding-top: 4px; }
.bar { width: 1px; height: 26px; background: #d0d2d6; }
.system { display: flex; align-items: center; gap: 9px; }
.transfer { margin: 0 7px; }

/* Taskbar */
.taskbar {
  position: relative;
  display: flex;
  height: 60px;
  border-top: 2px solid #242424;
  background: linear-gradient(90deg, #000 340px, #07090d 340px, #07090d 1580px, #000 1580px);
  color: #fff;
  font: 17px/28px "Open Sans", "Noto Sans", sans-serif;
  overflow: hidden;
}
.taskbar > div { position: relative; display: flex; }
.taskbar button { display: flex; align-items: center; justify-content: center; }
.taskbar > .ghost { position: absolute; inset: 0; display: block; color: #262626; font: 35px/40px "Open Sans", sans-serif; white-space: nowrap; }
.ghost span { position: absolute; top: 0; }
.ghost .g1 { left: 438px; }
.ghost .g2 { left: 798px; }
.ghost .g3 { left: 1205px; }
.ghost .g4 { left: 804px; top: 46px; }
.ghost .g5 { left: 1178px; top: 46px; }
.pinned button { width: 72px; }
.pinned .browser { width: 74px; padding-left: 2px; }
.pinned .browser + button, .pinned .browser:last-child { width: 70px; padding: 0; }
.taskbar .tasks button {
  justify-content: flex-start;
  gap: 6px;
  width: 170px;
  margin: 0 6px;
  padding: 0 0 0 7px;
  border-bottom: 3px solid #76b9ed;
  white-space: nowrap;
}
.tasks svg { width: 35px; height: 18px; }
.taskbar .tasks .active { width: 182px; margin: 0; padding-left: 13px; background: rgba(90, 90, 92, .6); }
.tray { margin-left: auto; }
.t-icon { width: 36px; }
.t-pen { width: 48px; }
.t-lang { width: 54px; }
.t-clock { width: 104px; }
.t-note { width: 60px; }
.peek { width: 8px; margin-left: 12px; border-left: 2px solid #555; }
```
